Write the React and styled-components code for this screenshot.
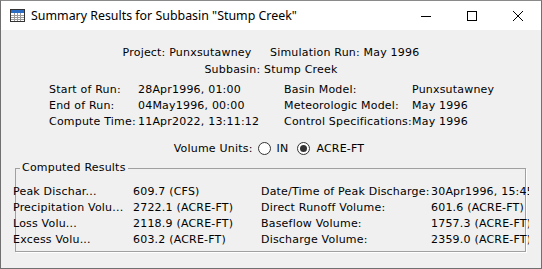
import * as React from 'react';
import styled, { createGlobalStyle } from 'styled-components';

const GlobalStyle = createGlobalStyle`
    html, body {
        margin: 0;
        padding: 0;
        background: #ffffff;
    }
`;

// Window frame
const Window = styled.div`
    width: 542px;
    height: 269px;
    box-sizing: border-box;
    border: 1px solid #707070;
    border-top-color: #8a8a8a;
    display: flex;
    flex-direction: column;
    background: #f0f0f0;
    overflow: hidden;
    font-family: "DejaVu Sans", Verdana, sans-serif;
    font-size: 11px;
    letter-spacing: 0.2px;
    color: #000;
`;

const TitleBar = styled.div`
    height: 29px;
    flex: none;
    background: #ffffff;
    display: flex;
    align-items: center;
    padding-left: 9px;
`;

const Title = styled.div`
    flex: 1;
    margin-left: 6px;
    font-family: "Noto Sans", "Liberation Sans", sans-serif;
    font-size: 12.4px;
    letter-spacing: 0;
    color: #000;
    white-space: nowrap;
`;

const Controls = styled.div`
    display: flex;
    height: 100%;
`;

const ControlButton = styled.div`
    width: 46px;
    height: 100%;
    display: flex;
    align-items: center;
    justify-content: center;
`;

const Body = styled.div`
    flex: 1;
    display: flex;
    flex-direction: column;
    padding-top: 14px;
`;

const HeaderLine = styled.div`
    text-align: center;
    line-height: 17px;
    white-space: pre;
`;

const InfoGrid = styled.div`
    margin-top: 4px;
    margin-left: 48px;
    display: grid;
    grid-template-columns: 89px 146px 128px auto;
    grid-auto-rows: 16px;
    line-height: 16px;
    white-space: nowrap;
`;

const UnitsRow = styled.div`
    margin-top: 10px;
    height: 16px;
    display: flex;
    align-items: center;
    justify-content: center;
    gap: 5px;
`;

const RadioLabel = styled.label`
    display: flex;
    align-items: center;
    gap: 6px;
    padding-right: 4px;
`;

const RadioDot = styled.span`
    width: 11px;
    height: 11px;
    border: 1px solid #333;
    border-radius: 50%;
    background: #fff;
    display: flex;
    align-items: center;
    justify-content: center;

    &::after {
        content: '';
        width: 7px;
        height: 7px;
        border-radius: 50%;
        background: ${props => (props.checked ? '#333' : 'transparent')};
    }
`;

const Group = styled.fieldset`
    margin: 4px 0 0 14px;
    width: 511px;
    min-width: 0;
    box-sizing: border-box;
    padding: 8px 0 3px 0;
    border: 1px solid #a0a0a0;
    box-shadow: 1px 1px 0 #ffffff;
`;

const Legend = styled.legend`
    margin-left: 4px;
    padding: 0 2px;
    line-height: 16px;
`;

const ResultsGrid = styled.div`
    margin-left: -3px;
    width: 516px;
    overflow: hidden;
    display: grid;
    grid-template-columns: 120px 128px 170px auto;
    grid-auto-rows: 16px;
    line-height: 16px;
    white-space: nowrap;
`;

const TableIcon = () => (
    <svg width="15" height="13" viewBox="0 0 15 13">
        <rect x="0.5" y="0.5" width="14" height="12" fill="#ffffff" stroke="#333" />
        <rect x="1" y="1" width="13" height="3" fill="#2b6cc4" />
        {[4, 7, 10].map(x => (
            <line key={x} x1={x + 0.5} y1="4" x2={x + 0.5} y2="12" stroke="#9a9a9a" />
        ))}
        {[6, 8, 10].map(y => (
            <line key={y} x1="1" y1={y + 0.5} x2="14" y2={y + 0.5} stroke="#9a9a9a" />
        ))}
    </svg>
);

const info = [
    ['Start of Run:', '28Apr1996, 01:00', 'Basin Model:', 'Punxsutawney'],
    ['End of Run:', '04May1996, 00:00', 'Meteorologic Model:', 'May 1996'],
    ['Compute Time:', '11Apr2022, 13:11:12', 'Control Specifications:', 'May 1996']
];

const results = [
    ['Peak Dischar...', '609.7 (CFS)', 'Date/Time of Peak Discharge:', '30Apr1996, 15:45'],
    ['Precipitation Volu...', '2722.1 (ACRE-FT)', 'Direct Runoff Volume:', '601.6 (ACRE-FT)'],
    ['Loss Volu...', '2118.9 (ACRE-FT)', 'Baseflow Volume:', '1757.3 (ACRE-FT)'],
    ['Excess Volu...', '603.2 (ACRE-FT)', 'Discharge Volume:', '2359.0 (ACRE-FT)']
];

class App extends React.Component {
    state = { units: 'ACRE-FT' };

    render() {
        const { units } = this.state;
        return (
            <>
                <GlobalStyle />
                <Window>
                    <TitleBar>
                        <TableIcon />
                        <Title>Summary Results for Subbasin "Stump Creek"</Title>
                        <Controls>
                            <ControlButton>
                                <svg width="10" height="10" viewBox="0 0 10 10">
                                    <line x1="0" y1="5.5" x2="10" y2="5.5" stroke="#000" />
                                </svg>
                            </ControlButton>
                            <ControlButton>
                                <svg width="10" height="10" viewBox="0 0 10 10">
                                    <rect x="0.5" y="0.5" width="9" height="9" fill="none" stroke="#000" />
                                </svg>
                            </ControlButton>
                            <ControlButton>
                                <svg width="10" height="10" viewBox="0 0 10 10">
                                    <path d="M0 0 L10 10 M10 0 L0 10" stroke="#000" strokeWidth="1" />
                                </svg>
                            </ControlButton>
                        </Controls>
                    </TitleBar>

                    <Body>
                        <HeaderLine>{'Project: Punxsutawney     Simulation Run: May 1996'}</HeaderLine>
                        <HeaderLine>Subbasin: Stump Creek</HeaderLine>

                        <InfoGrid>
                            {info.map(row => row.map((cell, i) => <span key={row[0] + i}>{cell}</span>))}
                        </InfoGrid>

                        <UnitsRow>
                            <span>Volume Units:</span>
                            <RadioLabel onClick={() => this.setState({ units: 'IN' })}>
                                <RadioDot checked={units === 'IN'} />
                                IN
                            </RadioLabel>
                            <RadioLabel onClick={() => this.setState({ units: 'ACRE-FT' })}>
                                <RadioDot checked={units === 'ACRE-FT'} />
                                ACRE-FT
                            </RadioLabel>
                        </UnitsRow>

                        <Group>
                            <Legend>Computed Results</Legend>
                            <ResultsGrid>
                                {results.map(row => row.map((cell, i) => <span key={row[0] + i}>{cell}</span>))}
                            </ResultsGrid>
                        </Group>
                    </Body>
                </Window>
            </>
        );
    }
}

export default App;
